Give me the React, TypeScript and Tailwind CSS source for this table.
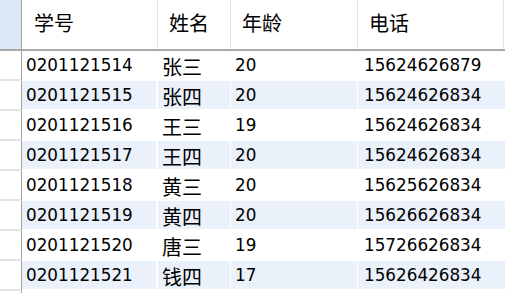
import React from "react";

type Student = {
  id: string;
  name: string;
  age: string;
  phone: string;
};

const rows: Student[] = [
  { id: "0201121514", name: "张三", age: "20", phone: "15624626879" },
  { id: "0201121515", name: "张四", age: "20", phone: "15624626834" },
  { id: "0201121516", name: "王三", age: "19", phone: "15624626834" },
  { id: "0201121517", name: "王四", age: "20", phone: "15624626834" },
  { id: "0201121518", name: "黄三", age: "20", phone: "15625626834" },
  { id: "0201121519", name: "黄四", age: "20", phone: "15626626834" },
  { id: "0201121520", name: "唐三", age: "19", phone: "15726626834" },
  { id: "0201121521", name: "钱四", age: "17", phone: "15626426834" },
];

const cjk = "font-['Noto_Sans_CJK_SC',sans-serif] text-[20px] text-black";
const num = "font-['DejaVu_Sans',sans-serif] text-[16.8px] text-black";

export default function App() {
  return (
    <div className="h-[293px] w-[505px] overflow-hidden bg-white">
      {/* header */}
      <div className="flex h-[51px] border-b-2 border-[#a9a9a9]">
        <div className="w-[22px] shrink-0 border-r border-[#a0a0a0] bg-[#dbe8f6]" />
        <div className={`flex w-[136px] items-center border-r border-[#e2e2e2] pl-[12px] pb-[3px] ${cjk}`}>学号</div>
        <div className={`flex w-[73px] items-center border-r border-[#e2e2e2] pl-[11px] pb-[3px] ${cjk}`}>姓名</div>
        <div className={`flex w-[127px] items-center border-r border-[#e2e2e2] pl-[11px] pb-[3px] ${cjk}`}>年龄</div>
        <div className={`flex w-[146px] items-center border-r border-[#e2e2e2] pl-[11px] pb-[3px] ${cjk}`}>电话</div>
      </div>

      {/* body */}
      {rows.map((r, i) => {
        const bg = i % 2 === 1 ? "bg-[#eaf1fb]" : "bg-white";
        return (
          <div key={r.id} className="flex h-[30px]">
            <div className="w-[22px] shrink-0 border-r border-b-2 border-r-[#a0a0a0] border-b-[#e3e3e3] bg-white" />
            <div className={`flex w-[136px] items-center border-r-2 border-b-2 border-white pl-[4px] pt-[2px] ${bg} ${num}`}>{r.id}</div>
            <div className={`flex w-[73px] items-center border-r border-b-2 border-white pl-[4px] pt-[3px] ${bg} ${cjk}`}>{r.name}</div>
            <div className={`flex w-[127px] items-center border-r border-b-2 border-white pl-[4px] pt-[2px] ${bg} ${num}`}>{r.age}</div>
            <div className={`flex w-[147px] items-center border-b-2 border-white pl-[6px] pt-[2px] ${bg} ${num}`}>{r.phone}</div>
          </div>
        );
      })}
      <div className="h-[10px] w-[22px] border-r border-[#a0a0a0]" />
    </div>
  );
}
